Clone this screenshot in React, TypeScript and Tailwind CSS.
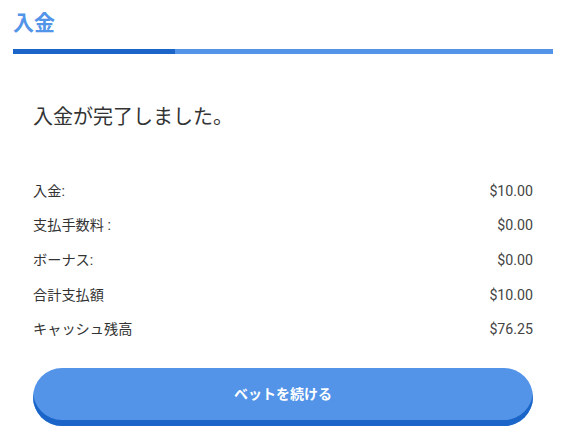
const rows = [
  { label: "入金:", value: "$10.00" },
  { label: "支払手数料 :", value: "$0.00" },
  { label: "ボーナス:", value: "$0.00" },
  { label: "合計支払額", value: "$10.00" },
  { label: "キャッシュ残高", value: "$76.25" },
];

export default function App() {
  return (
    <div
      className="w-[561px] h-[442px] bg-white px-[13px] pr-[8px] pt-[10px]"
      style={{ fontFamily: 'Roboto, "Noto Sans CJK JP", sans-serif' }}
    >
      <h1 className="text-[21px] leading-[26px] font-bold text-[#5294e8]">入金</h1>
      <div className="mt-[13px] flex h-[5px]">
        <div className="w-[162px] bg-[#1b65c9]" />
        <div className="flex-1 bg-[#5394e8]" />
      </div>
      <div className="px-5">
        <p className="mt-[51px] text-[20px] leading-[24px] text-[#333]">入金が完了しました。</p>
        <div className="mt-[45px] flex flex-col">
          {rows.map((r) => (
            <div key={r.label} className="flex h-[34.7px] items-center justify-between text-[14.2px] text-[#333]">
              <span>{r.label}</span>
              <span className="text-[#444]">{r.value}</span>
            </div>
          ))}
        </div>
        <button className="mt-[21px] h-[58px] w-full rounded-[29px] bg-[#5394e8] pb-[6px] text-[14px] font-bold text-white shadow-[inset_0_-6px_0_#1b65c9]">
          ベットを続ける
        </button>
      </div>
    </div>
  );
}
